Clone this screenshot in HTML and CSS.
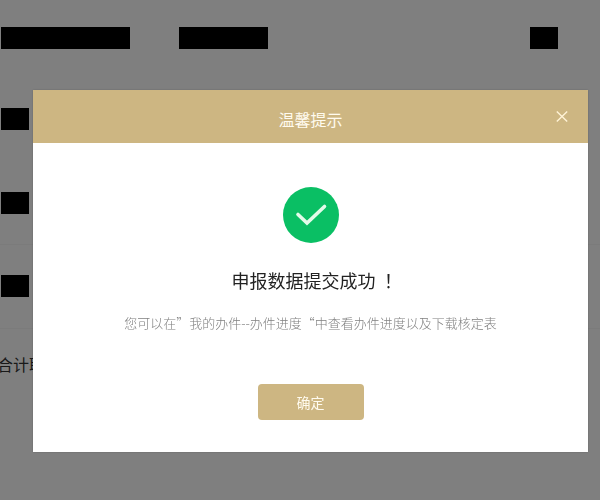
FILE: index.html
```html
<!DOCTYPE html>
<html lang="zh-CN">
<head>
<meta charset="utf-8">
<title>温馨提示</title>
<link rel="stylesheet" href="styles.css">
</head>
<body>
<table class="records">
  <tbody>
    <tr class="row-head">
      <td class="name"><span class="mask mask-wide"></span></td>
      <td class="kind"><span class="mask mask-mid"></span></td>
      <td class="state"><span class="mask mask-small"></span></td>
    </tr>
    <tr class="row row-tall"><td colspan="3"><span class="mask mask-small"></span></td></tr>
    <tr class="row row-short row-line"><td colspan="3"><span class="mask mask-small"></span></td></tr>
    <tr class="row row-line"><td colspan="3"><span class="mask mask-small"></span></td></tr>
    <tr class="row-total"><td colspan="3">合计取</td></tr>
  </tbody>
</table>
<div class="overlay">
  <section class="dialog" role="dialog" aria-modal="true" aria-labelledby="dialog-title">
    <header class="dialog-header">
      <h1 id="dialog-title" class="dialog-title">温馨提示</h1>
      <button class="close" type="button" aria-label="关闭">
        <svg viewBox="0 0 12 12" width="12" height="12"><path d="M0.800 0.500 11.200 10.500M11.200 0.500 0.800 10.500" fill="none" stroke="currentColor" stroke-width="1.400"/></svg>
      </button>
    </header>
    <div class="dialog-body">
      <svg class="success" viewBox="0 0 56 56" width="56" height="56">
        <circle cx="28" cy="28" r="28" fill="#0abf64"/>
        <path d="M15 27.500 24 36 41.500 19.500" fill="none" stroke="#e2fbe9" stroke-width="3.600" stroke-linecap="round" stroke-linejoin="miter"/>
      </svg>
      <h2 class="message">申报数据提交成功<span class="mark" lang="zh-TW">！</span></h2>
      <p class="hint">您可以在”我的办件--办件进度“中查看办件进度以及下载核定表</p>
      <button class="confirm" type="button">确定</button>
    </div>
  </section>
</div>
</body>
</html>
```
FILE: styles.css
```css
* {
  box-sizing: border-box;
}

body {
  margin: 0;
  min-height: 100vh;
  overflow: hidden;
  background: #fff;
  color: #333;
  font-family: "Noto Sans CJK SC", sans-serif;
}

h1, h2, p {
  margin: 0;
  font-weight: 400;
}

.records {
  width: 100%;
  border-collapse: collapse;
  table-layout: fixed;
}

.records td {
  padding: 0 0 0 1px;
  vertical-align: middle;
}

.records .name {
  width: 25%;
}

.records .kind {
  padding-left: 29px;
}

.records .state {
  width: 12%;
  padding-left: 2px;
}

.row-head {
  height: 76px;
}

.row {
  height: 84px;
}

.row-tall {
  height: 86px;
}

.row-short {
  height: 82px;
}

.row-line {
  border-bottom: 1px solid #f6f6f6;
}

.row-total {
  height: 72px;
  font-size: 16px;
  text-indent: -4px;
}

.mask {
  display: block;
  height: 22px;
  background: #000;
}

.mask-wide {
  width: 129px;
}

.mask-mid {
  width: 89px;
}

.mask-small {
  width: 28px;
}

.overlay {
  position: fixed;
  inset: 0;
  padding: 90px 12px 0 33px;
  background: rgba(0, 0, 0, 0.5);
}

.dialog {
  background: #fff;
  box-shadow: 0 0 2px rgba(0, 0, 0, 0.2);
}

.dialog-header {
  display: grid;
  grid-template-columns: 1fr auto 1fr;
  align-items: center;
  padding: 0 20px;
  background: #cdb682;
  color: #fffbef;
}

.dialog-title {
  grid-column: 2;
  padding-top: 5px;
  font-size: 16px;
  line-height: 48px;
}

.close {
  display: flex;
  justify-self: end;
  padding: 0;
  border: 0;
  background: none;
  color: #fff3d6;
}

.dialog-body {
  display: flex;
  flex-direction: column;
  align-items: center;
  padding: 44px 24px 32px;
}

.message {
  margin-top: 24px;
  color: #222;
  font-size: 18px;
  line-height: 26px;
  white-space: nowrap;
}

.mark {
  margin: 0 -8px 0 4px;
  font-family: "Noto Sans CJK TC", sans-serif;
}

.hint {
  margin-top: 20px;
  color: #808080;
  font-size: 13px;
  font-weight: 300;
  line-height: 20px;
}

.confirm {
  width: 106px;
  height: 36px;
  margin-top: 51px;
  padding: 0;
  border: 0;
  border-radius: 4px;
  background: #cdb682;
  color: #fffbef;
  font-family: inherit;
  font-size: 14px;
}
```
